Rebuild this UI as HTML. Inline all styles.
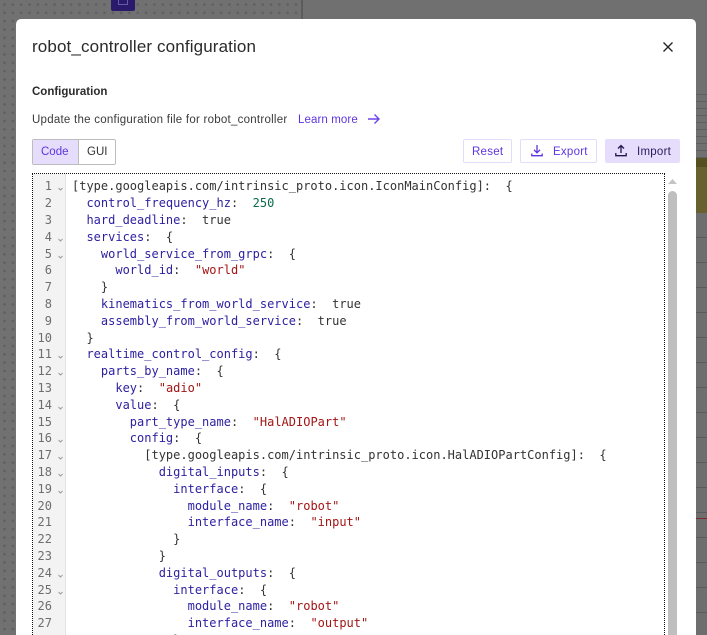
<!DOCTYPE html>
<html>
<head>
<meta charset="utf-8">
<style>
html,body{margin:0;padding:0;width:707px;height:635px;overflow:hidden;background:#707070;font-family:"Liberation Sans",sans-serif}
#root{position:absolute;left:0;top:0;width:707px;height:635px;overflow:hidden;background:#707070}
.abs{position:absolute}
#dots{left:0;top:0;width:302px;height:635px;background-color:#717171;background-image:radial-gradient(circle at 4.500px 4.500px,#606060 1.200px,transparent 1.500px);background-size:8.33px 8.33px}
#vline{left:301px;top:0;width:2px;height:20px;background:#5c5c5c}
#tile{left:111px;top:0;width:24px;height:11px;background:#2a1a6b;border-radius:0 0 2px 2px}
#tile i{position:absolute;left:7px;top:-5px;width:10px;height:10px;border:1.5px solid #6a5aa5;box-sizing:border-box}
#dialog{left:16px;top:19px;width:680px;height:616px;background:#fff;border-radius:5px 5px 0 0}
.t{position:absolute;white-space:nowrap;color:#2b2b2b}
.btn{position:absolute;box-sizing:border-box;height:24px;border-radius:2px;border:1px solid #e4dcfb;font-size:11.5px;line-height:24px;color:#5e35e0;white-space:nowrap;letter-spacing:.25px}
.btn span{position:absolute;top:0}
svg{position:absolute;overflow:visible}
#code{left:32px;top:173px;width:633px;height:462px;box-sizing:border-box;border:1px dotted #111;border-bottom:0;background:#fff}
#gutter{left:33px;top:174px;width:32px;height:461px;background:#f3f3f3;border-right:1px solid #e2e2e2}
#lines{position:absolute;left:0;top:0;width:707px;height:635px;overflow:hidden}
.ln,.l{position:absolute;font:12px/18px "DejaVu Sans Mono",monospace;white-space:pre;height:18px}
.ln{width:20px;text-align:right;left:32px;color:#6e6e6e}
.l{left:72px;color:#333}
.l b{font-weight:normal;color:#2b1fa0}
.l u{text-decoration:none;color:#a31515}
.l s{text-decoration:none;color:#0a6b4a}
</style>
</head>
<body>
<div id="root">
<div id="dots" class="abs"></div>
<div id="vline" class="abs"></div>
<div id="tile" class="abs"><i></i></div>

<!-- right background strip -->
<div class="abs" style="left:696px;top:88px;width:11px;height:70px;background:repeating-linear-gradient(180deg,#707070 0,#707070 6px,#5f5f5f 6px,#5f5f5f 7px)"></div>
<div class="abs" style="left:696px;top:158px;width:11px;height:9px;background:#55501f"></div>
<div class="abs" style="left:696px;top:167px;width:11px;height:46px;background:#66612e"></div>
<div class="abs" style="left:696px;top:213px;width:11px;height:422px;background:repeating-linear-gradient(180deg,#6e6e6e 0,#6e6e6e 24px,#5b5b5b 24px,#5b5b5b 25px)"></div>
<div class="abs" style="left:696px;top:518px;width:11px;height:1px;background:#7c2a2e"></div>

<div id="dialog" class="abs"></div>

<div class="t" style="left:32px;top:37px;font-size:17px;line-height:20px;color:#2a2a2a;letter-spacing:.13px">robot_controller configuration</div>
<svg style="left:663px;top:42px" width="10" height="10" viewBox="0 0 10 10"><path d="M.5 .5L9.500 9.500M9.500 .5L.5 9.500" stroke="#222" stroke-width="1.3" fill="none"/></svg>

<div class="t" style="left:32px;top:85px;font-size:11.5px;line-height:14px;font-weight:bold;color:#2b2b2b">Configuration</div>
<div class="t" style="left:32px;top:113px;font-size:11.5px;line-height:14px;letter-spacing:.25px;color:#3a3a3a">Update the configuration file for robot_controller</div>
<div class="t" style="left:298px;top:113px;font-size:11.5px;line-height:14px;letter-spacing:.1px;color:#5e35e0">Learn more</div>
<svg style="left:368px;top:114px" width="12" height="10" viewBox="0 0 12 10"><path d="M0 5H11M6.500 .5L11 5L6.500 9.500" stroke="#6b45e6" stroke-width="1.4" fill="none"/></svg>

<!-- Code/GUI toggle -->
<div class="abs" style="left:32px;top:139px;width:84px;height:26px;box-sizing:border-box;border:1px solid #bdbdbd;border-radius:2px;background:#fff"></div>
<div class="abs" style="left:33px;top:140px;width:45px;height:24px;background:#e5ddfb;border-right:1px solid #bdbdbd"></div>
<div class="t" style="left:41px;top:145px;font-size:11.5px;line-height:14px;color:#5e35e0">Code</div>
<div class="t" style="left:87px;top:145px;font-size:11.5px;line-height:14px;color:#333">GUI</div>

<!-- Actions -->
<div class="btn" style="left:463px;top:139px;width:49px"><span style="left:8px">Reset</span></div>
<div class="btn" style="left:520px;top:139px;width:77px">
<svg style="left:10px;top:5px" width="12" height="12" viewBox="0 0 12 12"><path d="M6 0V7.500M3 4.800L6 7.800L9 4.800M.8 8.500V10.700H11.200V8.500" stroke="#5e35e0" stroke-width="1.3" fill="none"/></svg>
<span style="left:32px">Export</span></div>
<div class="btn" style="left:605px;top:139px;width:75px;background:#e5ddfb;border-color:#e5ddfb;color:#2a1a5e">
<svg style="left:9px;top:5px" width="12" height="12" viewBox="0 0 12 12"><path d="M6 8V.8M3 3.500L6 .5L9 3.500M.8 8V10.700H11.200V8" stroke="#22164f" stroke-width="1.3" fill="none"/></svg>
<span style="left:31px">Import</span></div>

<div id="code" class="abs"></div>
<div id="gutter" class="abs"></div>

<!-- scrollbar -->
<svg style="left:668px;top:178px" width="10" height="7" viewBox="0 0 10 7"><path d="M0 6L4.500 1L9 6Z" fill="#c4c4c4"/></svg>
<div class="abs" style="left:668px;top:191px;width:9px;height:444px;background:#bfbfbf;border-radius:4.500px 4.500px 0 0"></div>

<div id="lines">
<div class="ln" style="top:177px;left:32px">1</div><div class="l" style="top:177px">[type.googleapis.com/intrinsic_proto.icon.IconMainConfig]:  {</div>
<div class="ln" style="top:194px">2</div><div class="l" style="top:194px">  <b>control_frequency_hz</b>:  <s>250</s></div>
<div class="ln" style="top:211px">3</div><div class="l" style="top:211px">  <b>hard_deadline</b>:  true</div>
<div class="ln" style="top:228px">4</div><div class="l" style="top:228px">  <b>services</b>:  {</div>
<div class="ln" style="top:245px">5</div><div class="l" style="top:245px">    <b>world_service_from_grpc</b>:  {</div>
<div class="ln" style="top:261px">6</div><div class="l" style="top:261px">      <b>world_id</b>:  <u>"world"</u></div>
<div class="ln" style="top:278px">7</div><div class="l" style="top:278px">    }</div>
<div class="ln" style="top:295px">8</div><div class="l" style="top:295px">    <b>kinematics_from_world_service</b>:  true</div>
<div class="ln" style="top:312px">9</div><div class="l" style="top:312px">    <b>assembly_from_world_service</b>:  true</div>
<div class="ln" style="top:329px">10</div><div class="l" style="top:329px">  }</div>
<div class="ln" style="top:345px">11</div><div class="l" style="top:345px">  <b>realtime_control_config</b>:  {</div>
<div class="ln" style="top:362px">12</div><div class="l" style="top:362px">    <b>parts_by_name</b>:  {</div>
<div class="ln" style="top:379px">13</div><div class="l" style="top:379px">      <b>key</b>:  <u>"adio"</u></div>
<div class="ln" style="top:396px">14</div><div class="l" style="top:396px">      <b>value</b>:  {</div>
<div class="ln" style="top:413px">15</div><div class="l" style="top:413px">        <b>part_type_name</b>:  <u>"HalADIOPart"</u></div>
<div class="ln" style="top:429px">16</div><div class="l" style="top:429px">        <b>config</b>:  {</div>
<div class="ln" style="top:446px">17</div><div class="l" style="top:446px">          [type.googleapis.com/intrinsic_proto.icon.HalADIOPartConfig]:  {</div>
<div class="ln" style="top:463px">18</div><div class="l" style="top:463px">            <b>digital_inputs</b>:  {</div>
<div class="ln" style="top:480px">19</div><div class="l" style="top:480px">              <b>interface</b>:  {</div>
<div class="ln" style="top:497px">20</div><div class="l" style="top:497px">                <b>module_name</b>:  <u>"robot"</u></div>
<div class="ln" style="top:513px">21</div><div class="l" style="top:513px">                <b>interface_name</b>:  <u>"input"</u></div>
<div class="ln" style="top:530px">22</div><div class="l" style="top:530px">              }</div>
<div class="ln" style="top:547px">23</div><div class="l" style="top:547px">            }</div>
<div class="ln" style="top:564px">24</div><div class="l" style="top:564px">            <b>digital_outputs</b>:  {</div>
<div class="ln" style="top:581px">25</div><div class="l" style="top:581px">              <b>interface</b>:  {</div>
<div class="ln" style="top:597px">26</div><div class="l" style="top:597px">                <b>module_name</b>:  <u>"robot"</u></div>
<div class="ln" style="top:614px">27</div><div class="l" style="top:614px">                <b>interface_name</b>:  <u>"output"</u></div>
<div class="l" style="top:631px">              }</div>
</div>

<svg style="left:.5px;top:1px" width="707" height="634" viewBox="0 0 707 634"><g stroke="#9a9a9a" stroke-width="1" fill="none"><path d="M57.500 187l2 2l2-2"/><path d="M57.500 238l2 2l2-2"/><path d="M57.500 255l2 2l2-2"/><path d="M57.500 355l2 2l2-2"/><path d="M57.500 372l2 2l2-2"/><path d="M57.500 406l2 2l2-2"/><path d="M57.500 439l2 2l2-2"/><path d="M57.500 456l2 2l2-2"/><path d="M57.500 473l2 2l2-2"/><path d="M57.500 490l2 2l2-2"/><path d="M57.500 574l2 2l2-2"/><path d="M57.500 591l2 2l2-2"/></g></svg>
</div>
</body>
</html>
